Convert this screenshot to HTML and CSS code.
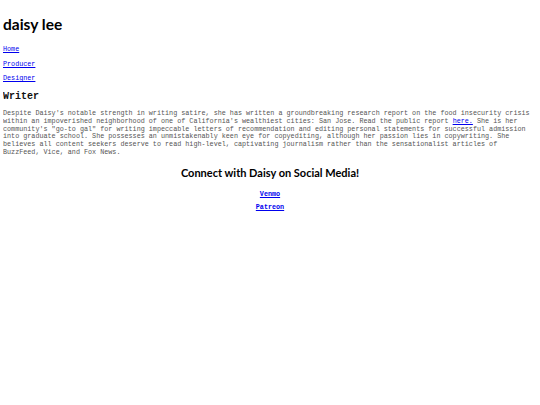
FILE: index.html
```html
<!DOCTYPE html>
<html>
<head>
<meta charset="utf-8">
<link rel="stylesheet" href="styles.css">
</head>
<body>
<h1 class="title">daisy lee</h1>
<nav class="nav">
<p class="nav-item"><a href="#">Home</a></p>
<p class="nav-item"><a href="#">Producer</a></p>
<p class="nav-item"><a href="#">Designer</a></p>
</nav>
<h2 class="section">Writer</h2>
<p class="bio">Despite Daisy's notable strength in writing satire, she has written a groundbreaking research report on the food insecurity crisis within an impoverished neighborhood of one of California's wealthiest cities: San Jose. Read the public report <a href="#">here.</a> She is her community's "go-to gal" for writing impeccable letters of recommendation and editing personal statements for successful admission into graduate school. She possesses an unmistakenably keen eye for copyediting, although her passion lies in copywriting. She believes all content seekers deserve to read high-level, captivating journalism rather than the sensationalist articles of BuzzFeed, Vice, and Fox News.</p>
<h3 class="connect">Connect with Daisy on Social Media!</h3>
<p class="social"><a href="#">Venmo</a></p>
<p class="social"><a href="#">Patreon</a></p>
</body>
</html>
```
FILE: styles.css
```css
html, body {
  background: #ffffff;
}
body {
  margin: 3px;
  font-family: "Liberation Mono", monospace;
  font-size: 6.76px;
  color: #000;
}
a {
  color: #0000ee;
}
.title {
  font-family: "Comic Sans MS", "Lato", sans-serif;
  font-weight: bold;
  font-size: 15.5px;
  margin: 12px 0 0 0;
  line-height: 18px;
}
.nav {
  margin-top: 12px;
}
.nav-item {
  margin: 0 0 6.5px 0;
  line-height: 8px;
}
.section {
  font-family: "Liberation Mono", monospace;
  font-weight: bold;
  font-size: 10px;
  margin: 9px 0 8px 0;
  color: #111;
}
.bio {
  color: #555;
  margin: 0;
  line-height: 7.8px;
}
.connect {
  font-family: "Comic Sans MS", "Lato", sans-serif;
  font-weight: bold;
  font-size: 11px;
  text-align: center;
  margin: 9px 0 11px 0;
}
.social {
  text-align: center;
  font-weight: bold;
  margin: 0 0 5px 0;
  line-height: 8px;
}
```
